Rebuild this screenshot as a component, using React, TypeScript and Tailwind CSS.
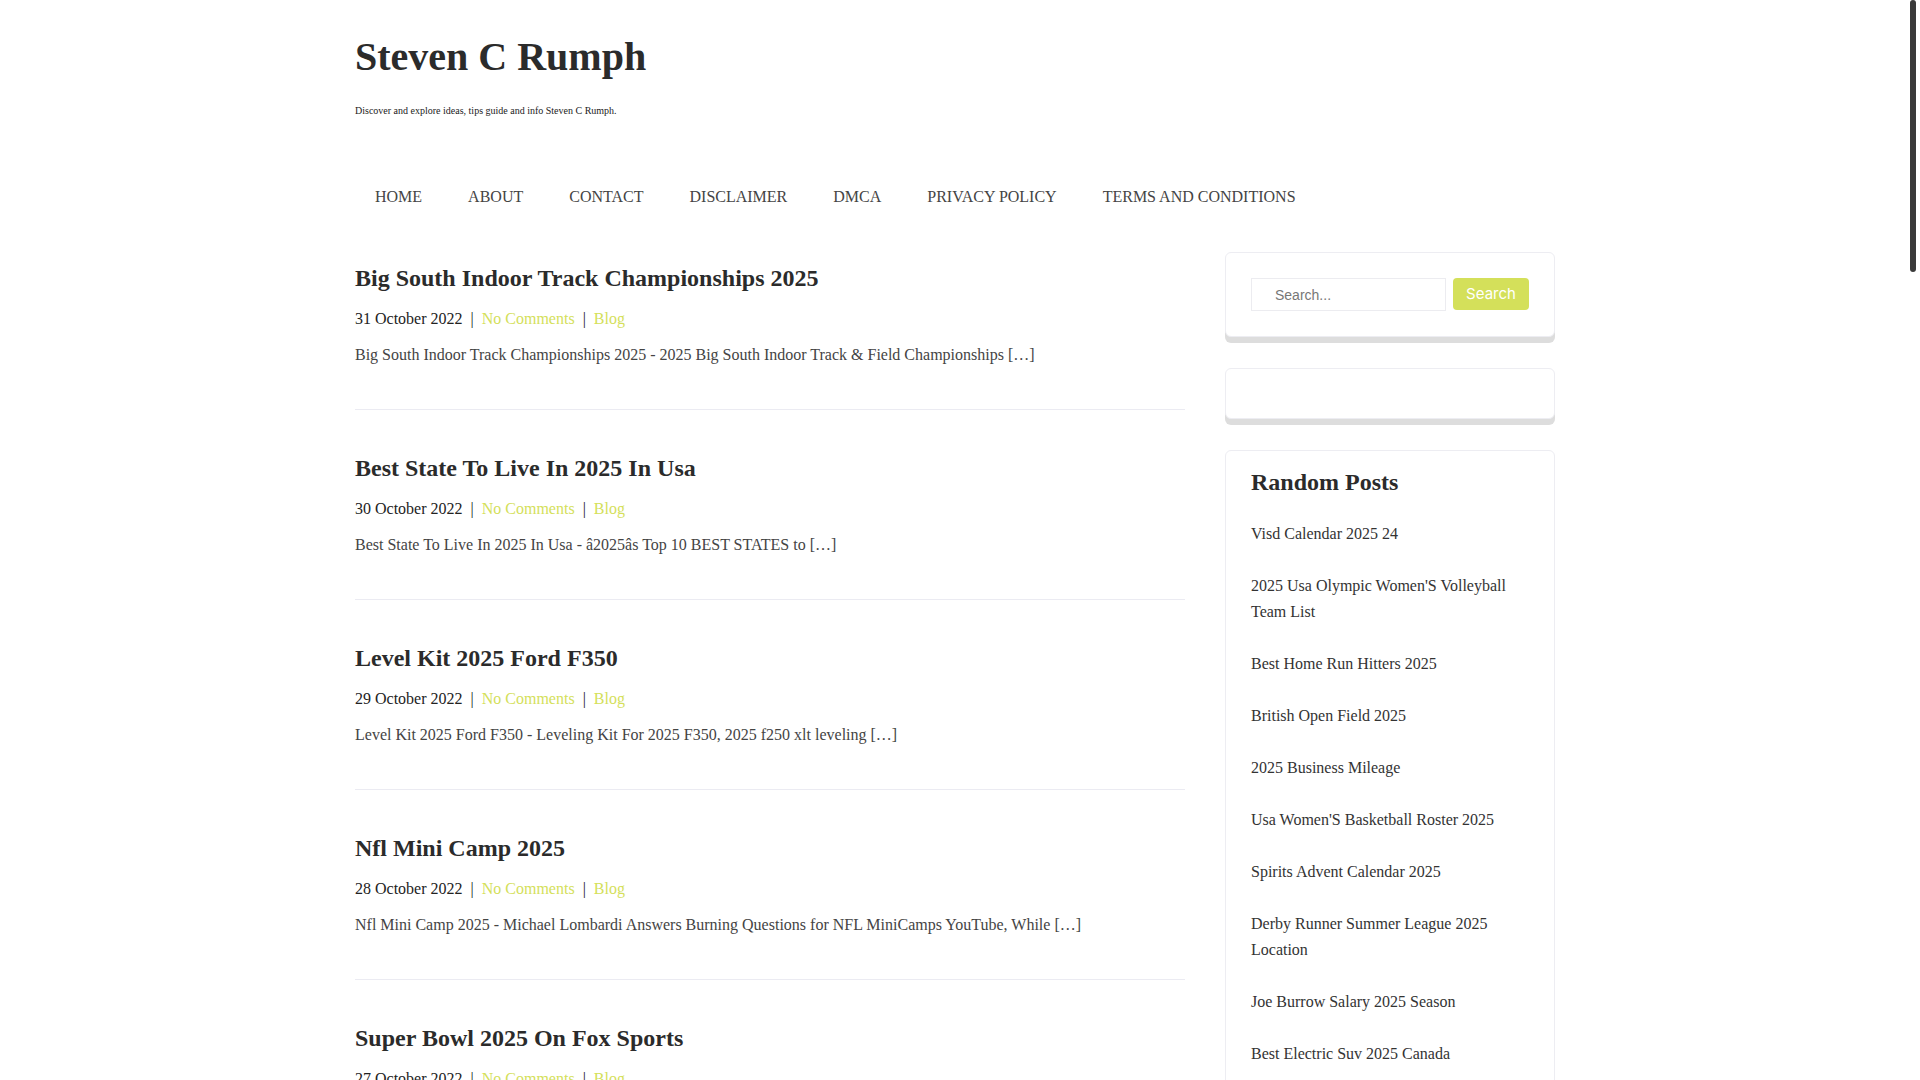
import React from "react";

type Post = { title: string; date: string; excerpt: string };

// posts in the main column
const posts: Post[] = [
  {
    title: "Big South Indoor Track Championships 2025",
    date: "31 October 2022",
    excerpt:
      "Big South Indoor Track Championships 2025 - 2025 Big South Indoor Track & Field Championships […]",
  },
  {
    title: "Best State To Live In 2025 In Usa",
    date: "30 October 2022",
    excerpt: "Best State To Live In 2025 In Usa - â2025âs Top 10 BEST STATES to […]",
  },
  {
    title: "Level Kit 2025 Ford F350",
    date: "29 October 2022",
    excerpt: "Level Kit 2025 Ford F350 - Leveling Kit For 2025 F350, 2025 f250 xlt leveling […]",
  },
  {
    title: "Nfl Mini Camp 2025",
    date: "28 October 2022",
    excerpt:
      "Nfl Mini Camp 2025 - Michael Lombardi Answers Burning Questions for NFL MiniCamps YouTube, While […]",
  },
  {
    title: "Super Bowl 2025 On Fox Sports",
    date: "27 October 2022",
    excerpt: "Super Bowl 2025 On Fox Sports […]",
  },
];

const menu = ["HOME", "ABOUT", "CONTACT", "DISCLAIMER", "DMCA", "PRIVACY POLICY", "TERMS AND CONDITIONS"];

const randomPosts = [
  "Visd Calendar 2025 24",
  "2025 Usa Olympic Women'S Volleyball Team List",
  "Best Home Run Hitters 2025",
  "British Open Field 2025",
  "2025 Business Mileage",
  "Usa Women'S Basketball Roster 2025",
  "Spirits Advent Calendar 2025",
  "Derby Runner Summer League 2025 Location",
  "Joe Burrow Salary 2025 Season",
  "Best Electric Suv 2025 Canada",
];

function PostItem({ post }: { post: Post }) {
  return (
    <article className="pt-[12px] pb-[42px] mb-[32px] border-b border-[#ebebf2]">
      <h2 className="text-[24px] leading-[29px] font-bold text-[#2b2b2b]">{post.title}</h2>
      <div className="mt-[14px] text-[16px] leading-[24px] text-[#222]">
        {post.date}
        <span className="mx-[8px]">|</span>
        <a className="text-[#d4e05a]">No Comments</a>
        <span className="mx-[8px]">|</span>
        <a className="text-[#d4e05a]">Blog</a>
      </div>
      <p className="mt-[12px] text-[16px] leading-[24px] text-[#444]">{post.excerpt}</p>
    </article>
  );
}

// sidebar box with the grey lip at the bottom
function Widget({ children, className = "" }: { children?: React.ReactNode; className?: string }) {
  return (
    <div
      className={`bg-white border border-[#ededf2] rounded-[6px] shadow-[0_6px_0_0_#dddddd] mb-[31px] ${className}`}
    >
      {children}
    </div>
  );
}

export default function App() {
  return (
    <div
      className="relative bg-white text-[#333] pr-[10px]"
      style={{ fontFamily: '"Liberation Serif", "Times New Roman", serif' }}
    >
      {/* scrollbar thumb as seen in the screenshot */}
      <div className="fixed top-0 right-[4px] w-[6px] h-[272px] bg-[#3a3a3a] rounded-[3px]" />

      <div className="w-[1200px] mx-auto pb-[40px]">
        {/* header */}
        <header className="pt-[33px]">
          <h1 className="text-[40px] leading-[48px] font-bold text-[#2b2b2b]">Steven C Rumph</h1>
          <p className="mt-[22px] text-[10px] leading-[16px] text-[#222]">
            Discover and explore ideas, tips guide and info Steven C Rumph.
          </p>
        </header>

        <nav className="mt-[66px] flex gap-[6px]">
          {menu.map((m) => (
            <a key={m} className="px-5 text-[16px] leading-[24px] text-[#444]">
              {m}
            </a>
          ))}
        </nav>

        <div className="mt-[43px] flex gap-[40px] items-start">
          {/* posts */}
          <main className="w-[830px]">
            {posts.map((p) => (
              <PostItem key={p.title} post={p} />
            ))}
          </main>

          {/* sidebar */}
          <aside className="w-[330px]">
            <Widget className="p-[25px]">
              <form className="flex items-start gap-[7px]" onSubmit={(e) => e.preventDefault()}>
                <input
                  type="text"
                  placeholder="Search..."
                  className="w-[195px] h-[33px] border border-[#ececf0] pl-[23px] text-[14px] text-[#555] placeholder:text-[#777] outline-none"
                  style={{ fontFamily: '"Liberation Sans", Arial, sans-serif' }}
                />
                <button
                  type="submit"
                  className="h-[32px] w-[76px] rounded-[4px] bg-[#d4e05a] text-white text-[15px]"
                  style={{ fontFamily: "Inter, sans-serif" }}
                >
                  Search
                </button>
              </form>
            </Widget>

            <Widget className="h-[51px]" />

            <Widget className="px-[25px] pt-[17px] pb-[10px]">
              <h3 className="text-[24px] leading-[29px] font-bold text-[#2b2b2b] mb-[11px]">Random Posts</h3>
              <ul>
                {randomPosts.map((r) => (
                  <li key={r} className="py-[13px] text-[16px] leading-[26px] text-[#333]">
                    <a>{r}</a>
                  </li>
                ))}
              </ul>
            </Widget>
          </aside>
        </div>
      </div>
    </div>
  );
}
